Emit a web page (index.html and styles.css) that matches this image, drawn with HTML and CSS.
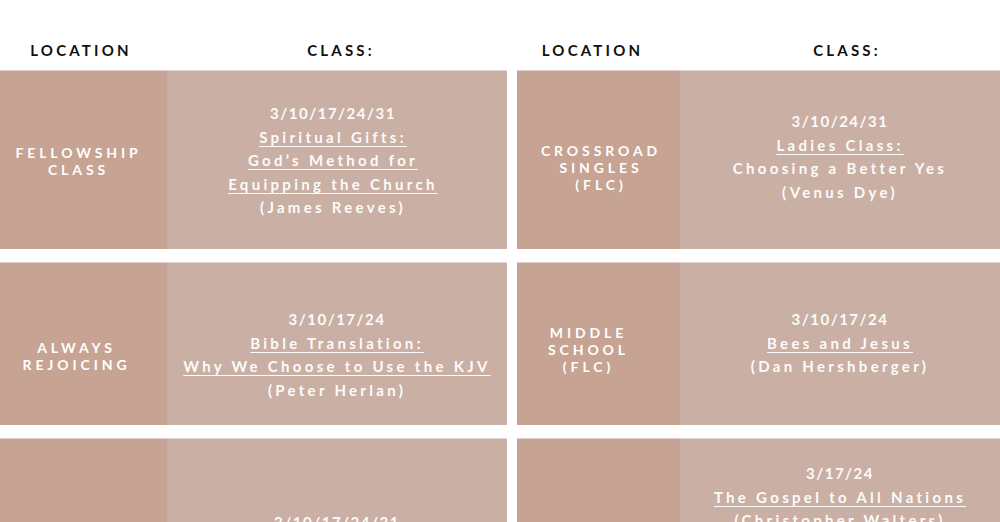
FILE: index.html
```html
<!DOCTYPE html>
<html lang="en">
<head>
<meta charset="utf-8">
<title>Class Schedule</title>
<link rel="stylesheet" href="styles.css">
</head>
<body>
<main class="schedule">
  <div class="row head-row">
    <div class="pair pair-left">
      <div class="head head-ll">LOCATION</div>
      <div class="head head-lc">CLASS:</div>
    </div>
    <div class="pair pair-right">
      <div class="head head-rl">LOCATION</div>
      <div class="head head-rc">CLASS:</div>
    </div>
  </div>

  <div class="row row-1">
    <div class="pair pair-left">
      <div class="loc p-r1-ll">FELLOWSHIP<br>CLASS</div>
      <div class="cls p-r1-lc">
        <span class="date">3/10/17/24/31</span>
        <a href="#">Spiritual Gifts:</a>
        <a href="#">God’s Method for</a>
        <a href="#">Equipping the Church</a>
        <span>(James Reeves)</span>
      </div>
    </div>
    <div class="pair pair-right">
      <div class="loc p-r1-rl">CROSSROAD<br>SINGLES<br>(FLC)</div>
      <div class="cls p-r1-rc">
        <span class="date">3/10/24/31</span>
        <a href="#">Ladies Class:</a>
        <span>Choosing a Better Yes</span>
        <span>(Venus Dye)</span>
      </div>
    </div>
  </div>

  <div class="row row-2">
    <div class="pair pair-left">
      <div class="loc p-r2-ll">ALWAYS<br>REJOICING</div>
      <div class="cls p-r2-lc">
        <span class="date">3/10/17/24</span>
        <a href="#">Bible Translation:</a>
        <a href="#">Why We Choose to Use the KJV</a>
        <span>(Peter Herlan)</span>
      </div>
    </div>
    <div class="pair pair-right">
      <div class="loc p-r2-rl">MIDDLE<br>SCHOOL<br>(FLC)</div>
      <div class="cls p-r2-rc">
        <span class="date">3/10/17/24</span>
        <a href="#">Bees and Jesus</a>
        <span>(Dan Hershberger)</span>
      </div>
    </div>
  </div>

  <div class="row row-3">
    <div class="pair pair-left">
      <div class="loc"></div>
      <div class="cls p-r3-lc">
        <span class="date">3/10/17/24/31</span>
      </div>
    </div>
    <div class="pair pair-right">
      <div class="loc"></div>
      <div class="cls p-r3-rc">
        <span class="date">3/17/24</span>
        <a href="#">The Gospel to All Nations</a>
        <span>(Christopher Walters)</span>
      </div>
    </div>
  </div>
</main>
</body>
</html>
```

FILE: styles.css
```css
* { box-sizing: border-box; }

html, body {
  margin: 0;
  padding: 0;
  background: #ffffff;
  overflow: hidden;
}

body {
  width: 1000px;
  height: 522px;
  font-family: "Lato", "Liberation Sans", sans-serif;
  font-weight: 700;
}

.schedule {
  display: flex;
  flex-direction: column;
  gap: 13px;
}

.row {
  display: flex;
  gap: 10px;
}

.head-row {
  height: 70px;
  margin-bottom: -13px;
}

.row-1 { height: 179px; }
.row-2 { height: 163px; }
.row-3 { height: 200px; }

.pair {
  display: grid;
}

.pair-left {
  width: 507px;
  grid-template-columns: 167px 340px;
}

.pair-right {
  width: 483px;
  grid-template-columns: 163px 320px;
}

.head {
  display: flex;
  align-items: center;
  justify-content: center;
  padding-top: 30px;
  font-size: 15px;
  letter-spacing: 3.2px;
  color: #111111;
}

.head-ll { padding-right: 5px; }
.head-lc { padding-left: 8px; }
.head-rl { padding-right: 12px; }
.head-rc { padding-left: 14px; }

.loc {
  background: #c6a392;
  color: #ffffff;
  font-size: 14px;
  line-height: 17px;
  letter-spacing: 3.9px;
  text-align: center;
  border-top: 1px solid #e3d2ca;
}

.cls {
  background: #c9afa4;
  color: #fdfbfa;
  font-size: 15px;
  line-height: 23.5px;
  letter-spacing: 3.3px;
  display: flex;
  flex-direction: column;
  align-items: center;
  text-align: center;
  border-top: 1px solid #e5d8d2;
}

.cls .date {
  letter-spacing: 1.5px;
}

.cls a {
  color: #fdfbfa;
  text-decoration: underline;
  text-decoration-thickness: 1px;
  text-underline-offset: 3px;
}

/* per-cell placement, matching the original layout */
.p-r1-ll { padding-top: 73px; padding-right: 10px; }
.p-r1-lc { padding-top: 31px; padding-right: 8px; }
.p-r1-rl { padding-top: 71px; padding-left: 5px; }
.p-r1-rc { padding-top: 39px; }

.p-r2-ll { padding-top: 76px; padding-right: 14px; }
.p-r2-lc { padding-top: 45px; }
.p-r2-rl { padding-top: 61px; padding-right: 20px; }
.p-r2-rc { padding-top: 45px; }

.p-r3-lc { padding-top: 72px; }
.p-r3-rc { padding-top: 23px; }
```
